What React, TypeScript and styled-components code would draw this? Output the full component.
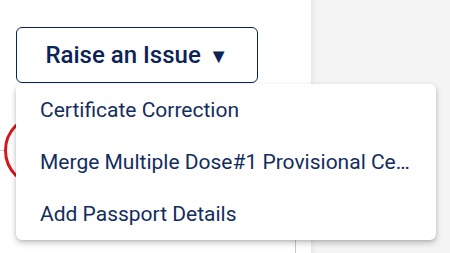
import { useState } from "react";
import { styled, createGlobalStyle } from "styled-components";

const GlobalStyle = createGlobalStyle`
  html, body {
    margin: 0;
    padding: 0;
    background: #ffffff;
    font-family: Roboto, "Liberation Sans", Arial, sans-serif;
  }
  * { box-sizing: border-box; }
`;

const Page = styled.div`
  display: flex;
  width: 450px;
  height: 253px;
  overflow: hidden;
`;

const MainPanel = styled.div`
  position: relative;
  width: 311px;
  flex-shrink: 0;
  display: flex;
  flex-direction: column;
  background: #ffffff;
`;

const SidePanel = styled.div`
  flex: 1;
  background: #f4f4f4;
  box-shadow: inset 5px 0 5px -3px rgba(0, 0, 0, 0.06);
`;

const Toolbar = styled.div`
  position: relative;
  padding: 27px 0 0 16px;
`;

const IssueButton = styled.button`
  display: flex;
  align-items: center;
  justify-content: center;
  gap: 8px;
  width: 242px;
  height: 56px;
  padding: 0;
  border: 1px solid #0b2356;
  border-radius: 6px;
  background: #ffffff;
  color: #0b2356;
  font-family: Roboto, "Liberation Sans", Arial, sans-serif;
  font-size: 24px;
  font-weight: 500;
  cursor: pointer;
`;

const Caret = styled.span`
  font-size: 20px;
  line-height: 1;
  margin-top: 2px;
`;

const Menu = styled.ul`
  position: absolute;
  top: 84px;
  left: 16px;
  width: 420px;
  margin: 0;
  padding: 0;
  list-style: none;
  background: #ffffff;
  border-radius: 6px;
  box-shadow: 0 3px 6px rgba(0, 0, 0, 0.22), 0 1px 3px rgba(0, 0, 0, 0.1);
  z-index: 10;
`;

const MenuItem = styled.li`
  height: 52px;
  display: flex;
  align-items: center;
  padding: 0 26px 0 24px;
  color: #132d5d;
  font-size: 21px;
  cursor: pointer;
`;

const ItemLabel = styled.span`
  white-space: nowrap;
  overflow: hidden;
  text-overflow: ellipsis;
`;

const Section = styled.div`
  flex: 1;
  width: 296px;
  margin-top: 31px;
  border-right: 1px solid #c8c8c8;
`;

const StatusRow = styled.div`
  display: flex;
  align-items: center;
`;

const Rule = styled.div`
  width: 4px;
  height: 1px;
  background: #c8c8c8;
`;

const StatusRing = styled.div`
  width: 73px;
  height: 73px;
  border: 3px solid #d3171d;
  border-radius: 50%;
`;

const issues = [
  "Certificate Correction",
  "Merge Multiple Dose#1 Provisional Certificates",
  "Add Passport Details",
];

export default function App() {
  const [open, setOpen] = useState(true);

  return (
    <>
      <GlobalStyle />
      <Page>
        <MainPanel>
          <Toolbar>
            <IssueButton onClick={() => setOpen(!open)}>
              Raise an Issue <Caret>▼</Caret>
            </IssueButton>
          </Toolbar>
          <Section>
            <StatusRow>
              <Rule />
              <StatusRing />
            </StatusRow>
          </Section>
          {open && (
            <Menu>
              {issues.map((label) => (
                <MenuItem key={label}>
                  <ItemLabel>{label}</ItemLabel>
                </MenuItem>
              ))}
            </Menu>
          )}
        </MainPanel>
        <SidePanel />
      </Page>
    </>
  );
}
